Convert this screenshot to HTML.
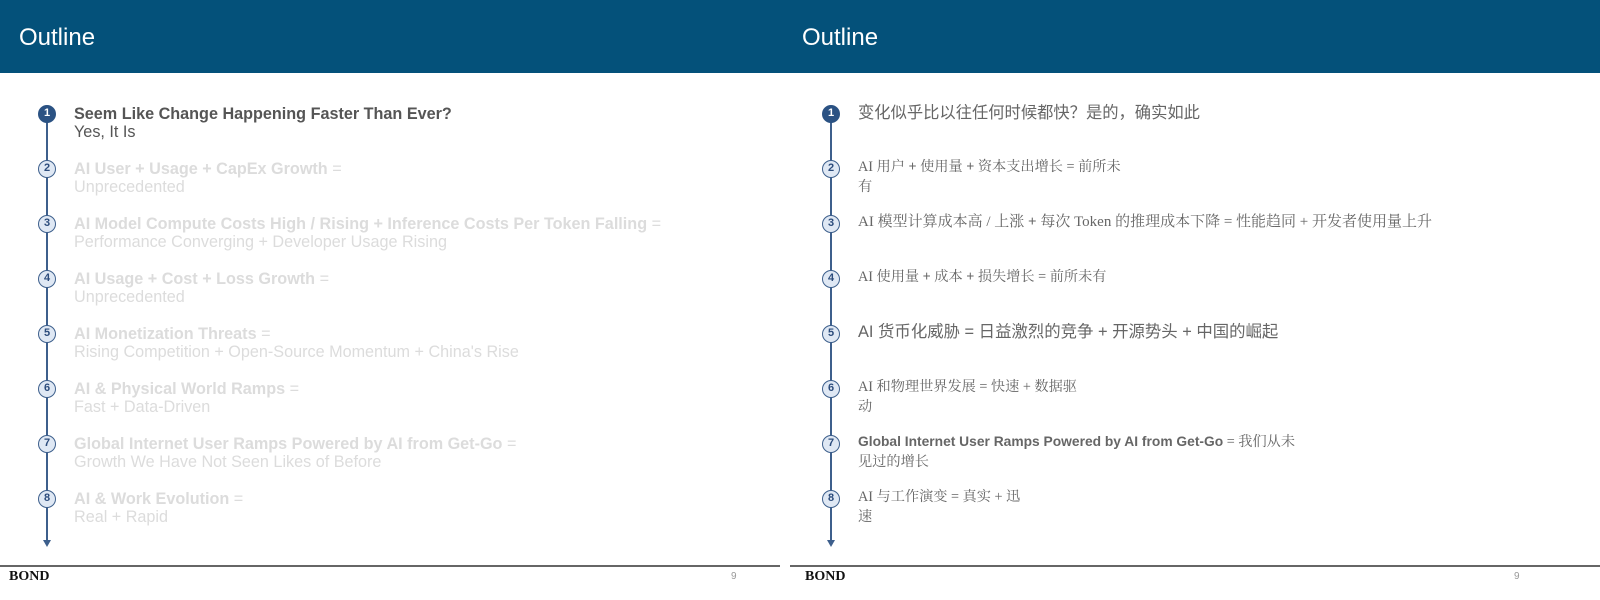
<!DOCTYPE html>
<html><head><meta charset="utf-8"><style>
*{margin:0;padding:0;box-sizing:border-box}
body{width:1600px;height:600px;background:#fff;position:relative;overflow:hidden;font-family:"Liberation Sans",sans-serif}
.hdr{position:absolute;top:0;left:0;width:1600px;height:73px;background:#04517a}
.ttl{position:absolute;top:24px;color:#fff;font-size:24px}
.vl{position:absolute;width:1.5px;background:#3d5f8c;top:114px;height:428px}
.arr{position:absolute;top:540px;width:0;height:0;border-left:4px solid transparent;border-right:4px solid transparent;border-top:7px solid #3d5f8c}
.c{position:absolute;width:18px;height:18px;border-radius:50%;border:1.5px solid #3d5f8c;background:#dfe8f4;color:#2c4c7c;font-size:11px;font-weight:bold;text-align:center;line-height:15px}
.c.f{background:#2b5283;color:#fff;border-color:#2b5283}
.t{position:absolute;font-size:16.2px;line-height:18px;color:#dcdcdc}
.t b{font-weight:bold}
.t.a{color:#555}
.z{position:absolute;font-family:"Liberation Serif","Noto Serif CJK SC",serif;font-size:14.2px;line-height:20px;color:#666}
.foot{position:absolute;top:565px;height:1.5px;background:#666}
.bond{position:absolute;top:569px;font-family:"Liberation Serif",serif;font-weight:bold;font-size:14px;color:#111}
.pg{position:absolute;top:571px;font-size:10px;color:#999}
</style></head><body>
<div class="hdr"></div>
<div class="ttl" style="left:19px">Outline</div>
<div class="ttl" style="left:802px">Outline</div>

<div class="vl" style="left:46px"></div><div class="arr" style="left:43px"></div>
<div class="vl" style="left:830px"></div><div class="arr" style="left:827px"></div>

<div class="c f" style="left:38px;top:105px">1</div>
<div class="c" style="left:38px;top:160px">2</div>
<div class="c" style="left:38px;top:215px">3</div>
<div class="c" style="left:38px;top:270px">4</div>
<div class="c" style="left:38px;top:325px">5</div>
<div class="c" style="left:38px;top:380px">6</div>
<div class="c" style="left:38px;top:435px">7</div>
<div class="c" style="left:38px;top:490px">8</div>

<div class="c f" style="left:822px;top:105px">1</div>
<div class="c" style="left:822px;top:160px">2</div>
<div class="c" style="left:822px;top:215px">3</div>
<div class="c" style="left:822px;top:270px">4</div>
<div class="c" style="left:822px;top:325px">5</div>
<div class="c" style="left:822px;top:380px">6</div>
<div class="c" style="left:822px;top:435px">7</div>
<div class="c" style="left:822px;top:490px">8</div>

<div class="t a" style="left:74px;top:105px"><b>Seem Like Change Happening Faster Than Ever?</b><br>Yes, It Is</div>
<div class="t" style="left:74px;top:160px"><b>AI User + Usage + CapEx Growth</b> =<br>Unprecedented</div>
<div class="t" style="left:74px;top:215px"><b>AI Model Compute Costs High / Rising + Inference Costs Per Token Falling</b> =<br>Performance Converging + Developer Usage Rising</div>
<div class="t" style="left:74px;top:270px"><b>AI Usage + Cost + Loss Growth</b> =<br>Unprecedented</div>
<div class="t" style="left:74px;top:325px"><b>AI Monetization Threats</b> =<br>Rising Competition + Open-Source Momentum + China's Rise</div>
<div class="t" style="left:74px;top:380px"><b>AI &amp; Physical World Ramps</b> =<br>Fast + Data-Driven</div>
<div class="t" style="left:74px;top:435px"><b>Global Internet User Ramps Powered by AI from Get-Go</b> =<br>Growth We Have Not Seen Likes of Before</div>
<div class="t" style="left:74px;top:490px"><b>AI &amp; Work Evolution</b> =<br>Real + Rapid</div>

<div class="z" style="left:858px;top:103px;font-size:16.3px;font-family:'Liberation Sans','Noto Sans CJK SC',sans-serif">变化似乎比以往任何时候都快？是的，确实如此</div>
<div class="z" style="left:858px;top:157px">AI 用户 <b>+</b> 使用量 <b>+</b> 资本支出增长 = 前所未<br>有</div>
<div class="z" style="left:858px;top:212px;font-size:15px">AI 模型计算成本高 / 上涨 <b>+</b> 每次 Token 的推理成本下降 = 性能趋同 + 开发者使用量上升</div>
<div class="z" style="left:858px;top:267px">AI 使用量 <b>+</b> 成本 <b>+</b> 损失增长 = 前所未有</div>
<div class="z" style="left:858px;top:322px;font-size:16.4px;font-family:'Liberation Sans','Noto Sans CJK SC',sans-serif">AI 货币化威胁 = 日益激烈的竞争 + 开源势头 + 中国的崛起</div>
<div class="z" style="left:858px;top:377px">AI 和物理世界发展 = 快速 + 数据驱<br>动</div>
<div class="z" style="left:858px;top:432px"><b style="font-family:'Liberation Sans',sans-serif;font-size:13.8px">Global Internet User Ramps Powered by AI from Get-Go</b> = 我们从未<br>见过的增长</div>
<div class="z" style="left:858px;top:487px">AI 与工作演变 = 真实 + 迅<br>速</div>

<div class="foot" style="left:0;width:780px"></div>
<div class="foot" style="left:790px;width:810px"></div>
<div class="bond" style="left:9px">BOND</div>
<div class="bond" style="left:805px">BOND</div>
<div class="pg" style="left:731px">9</div>
<div class="pg" style="left:1514px">9</div>
</body></html>
